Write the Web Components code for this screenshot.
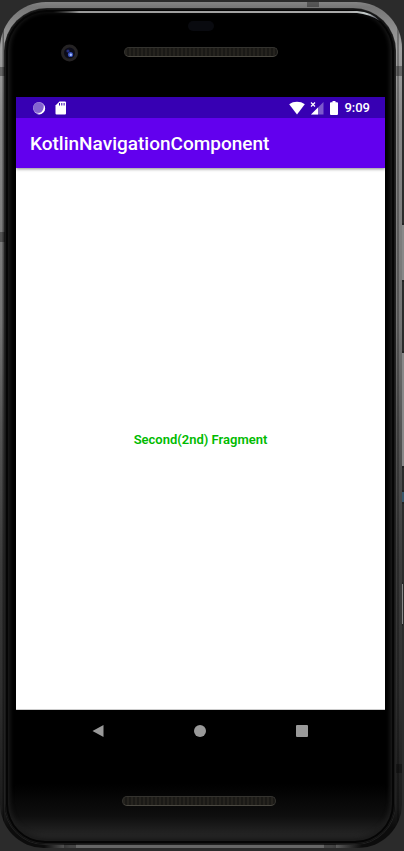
<!DOCTYPE html>
<html lang="en">
<head>
<meta charset="utf-8">
<meta name="viewport" content="width=device-width, initial-scale=1">
<title>KotlinNavigationComponent</title>
<style>
  body { margin: 0; background: #2b2b2b; font-family: Roboto, "Liberation Sans", sans-serif; }
</style>
</head>
<body>
<phone-frame>
  <phone-header slot="top"></phone-header>
  <status-bar time="9:09"></status-bar>
  <app-bar>KotlinNavigationComponent</app-bar>
  <fragment-view>Second(2nd) Fragment</fragment-view>
  <nav-bar></nav-bar>
  <speaker-grille slot="bottom"></speaker-grille>
</phone-frame>

<script>
function define(name, html) {
  const template = document.createElement('template');
  template.innerHTML = html;
  customElements.define(name, class extends HTMLElement {
    constructor() {
      super();
      this.attachShadow({ mode: 'open' }).append(template.content.cloneNode(true));
    }
    connectedCallback() {
      const time = this.shadowRoot.querySelector('time');
      if (time) time.textContent = this.getAttribute('time');
    }
  });
}

define('speaker-grille', `
<style>
  :host { display: block; box-sizing: border-box; width: 154px; height: 10px; border-radius: 5px;
    border: 1px solid #34332f; border-bottom-color: #4a4841;
    background: repeating-linear-gradient(90deg, #25231e 0 2px, #1a1916 2px 4px); }
</style>`);

define('phone-header', `
<style>
  :host { display: grid; grid-template-columns: 1fr auto 1fr; height: 88px; position: relative; }
  .camera { margin: 35px 0 0 56px; width: 17px; height: 18px; }
  .middle { display: flex; flex-direction: column; align-items: center; gap: 16px; padding: 12px 0 0 2px; }
  .sensor { width: 26px; height: 10px; border-radius: 5px; background: #090a0f; }
  .shine { position: absolute; top: 0; right: 0; width: 100%; height: 16px; }
</style>
<svg class="shine" viewBox="0 0 390 16" preserveAspectRatio="xMaxYMin slice" aria-hidden="true">
  <defs><linearGradient id="g"><stop offset="0" stop-color="#555" stop-opacity="0"/><stop offset=".08" stop-color="#999"/><stop offset=".9" stop-color="#aaa"/><stop offset=".96" stop-color="#c4cccc"/><stop offset="1" stop-color="#889" stop-opacity=".5"/></linearGradient></defs>
  <path d="M48 2H352Q367 3 375 12Q364 5 352 4H48Z" fill="url(#g)"/>
</svg>
<svg class="camera" viewBox="0 0 17 18" aria-hidden="true">
  <circle cx="8.500" cy="9" r="8.500" fill="#252324"/><circle cx="8.500" cy="9" r="5.500" fill="#0b0b18"/>
  <circle cx="7" cy="7" r="1.600" fill="#242e80"/><circle cx="9.500" cy="10.500" r="2.600" fill="#354eb5"/><circle cx="9.800" cy="10.800" r="1.200" fill="#a9c0ff"/>
</svg>
<div class="middle"><div class="sensor"></div><speaker-grille></speaker-grille></div>`);

define('phone-frame', `
<style>
  :host { display: block; position: relative; box-sizing: border-box; height: 100vh; min-height: 480px; padding: 2px 2px 3px 0; overflow: hidden; }
  .metal { position: relative; box-sizing: border-box; height: 100%; border-radius: 46px 46px 44px 44px; padding: 7px 7px 4px 5px;
    background:
      linear-gradient(90deg, #0000 44px, #666 70px calc(100% - 70px), #0000 calc(100% - 40px)) 0 100% / 100% 3px no-repeat,
      linear-gradient(90deg, #0000 2px, #0006 3px 4px, #0000 4px calc(100% - 5px), #0004 calc(100% - 5px) calc(100% - 3px), #0000 calc(100% - 3px)),
      linear-gradient(#858585, #777 5px, #a0a0a0 45px, #888 120px, #747474 38%, #555 50%, #3c3c3c 66%, #2e2e2e 82%, #1c1c1c calc(100% - 40px), #0c0c0c calc(100% - 20px)); }
  .glass { display: flex; flex-direction: column; box-sizing: border-box; height: 100%; overflow: hidden;
    border-radius: 42px 42px 40px 40px;
    box-shadow: 0 0 0 1px #222, inset 0 0 0 1px #181818, inset 0 0 0 3px #050505, inset 0 -2px 4px 5px #1c1c1c;
    background: linear-gradient(#000 calc(100% - 60px), #0e0e0e calc(100% - 28px), #282828 calc(100% - 6px), #080808 calc(100% - 2px)); }
  .screen { flex: 1; min-height: 0; display: flex; flex-direction: column; margin: 0 10px 0 11px; background: #000; }
  .foot { height: 92px; box-sizing: border-box; padding: 44px 0 0 0; display: flex; justify-content: center; }
  .foot slot { display: block; padding-right: 3px; }
  .seam { position: absolute; background: #0005; }
  .button { position: absolute; right: 0; width: 2px; background: #888; border: solid #222; border-width: 2px 0; box-sizing: border-box; }
</style>
<div class="button" style="top: 26.200%; height: 6.900%"></div>
<div class="button" style="top: 41.300%; height: 13.700%"></div>
<div class="button" style="top: 57.600%; height: 1.600%; background: #36566b"></div>
<div class="button" style="top: 68.400%; height: 5.200%; width: 1px; right: 1px"></div>
<div class="metal">
  <div class="glass">
    <slot name="top"></slot>
    <main class="screen"><slot></slot></main>
    <div class="foot"><slot name="bottom"></slot></div>
  </div>
  <i class="seam" style="left: 0; top: 65px; width: 5px; height: 9px"></i>
  <i class="seam" style="left: 0; top: 230px; width: 5px; height: 10px"></i>
  <i class="seam" style="right: 0; top: 64px; width: 6px; height: 10px"></i>
  <i class="seam" style="right: 0; bottom: 75px; width: 6px; height: 9px"></i>
  <i class="seam" style="right: 83px; top: 0; width: 12px; height: 5px"></i>
  <i class="seam" style="left: 64px; bottom: 0; width: 12px; height: 4px"></i>
  <i class="seam" style="right: 66px; bottom: 0; width: 12px; height: 4px"></i>
</div>`);

define('status-bar', `
<style>
  :host { display: flex; align-items: center; height: 21px; padding: 0 15px 0 16px; background: #3700b3; color: #fff; }
  svg { display: block; fill: currentColor; }
  .sd { margin-left: 9px; }
  .wifi { margin-left: auto; }
  .signal { margin-left: 5px; }
  .battery { margin: 0 6px; }
  time { font-size: 13px; line-height: 20px; font-weight: 500; }
</style>
<svg width="14" height="14" viewBox="0 0 14 14" aria-label="Sync"><circle cx="7" cy="7" r="6" fill="#b9a3e6"/><circle cx="6.500" cy="6.500" r="5.200" fill="#8463d0"/><path d="M12 4a6 6 0 0 1-8 8.500c4 .8 8-2 8-8.500z" fill="#fff"/></svg>
<svg class="sd" width="12" height="14" viewBox="0 0 12 14" aria-label="SD card"><path d="M4.500.5H10A1 1 0 0 1 11 1.500V12.500A1 1 0 0 1 10 13.500H1.500A1 1 0 0 1 .5 12.500V4.500Z"/><path d="M4 2h1v2.500H4zM6.300 2h1v2.500h-1zM8.600 2h1v2.500h-1z" fill="#3700b3"/></svg>
<svg class="wifi" width="16" height="14" viewBox="0 0 16 14" aria-label="Wi-Fi"><path d="M.2 3.200C4.500-.1 11.500-.1 15.800 3.200L8 13.500Z"/></svg>
<svg class="signal" width="14" height="14" viewBox="0 0 14 14" aria-label="No signal"><path d="M13.500 1V13.500H1Z" opacity=".35"/><path d="M8 6.500V13.500H1Z"/><path d="M1 1.500l4 4M5 1.500l-4 4" stroke="#fff" stroke-width="1.200"/></svg>
<svg class="battery" width="8" height="14" viewBox="0 0 8 14" aria-label="Battery full"><path d="M2.500 0h3v1.300H7a1 1 0 0 1 1 1V13a1 1 0 0 1-1 1H1a1 1 0 0 1-1-1V2.300a1 1 0 0 1 1-1h1.500z"/></svg>
<time></time>`);

define('app-bar', `
<style>
  :host { display: block; position: relative; z-index: 1; background: #6200ee; color: #fff; box-shadow: 0 1px 3px #0007; clip-path: inset(0 0 -6px 0); }
  h1 { margin: 0; padding: 15px 14px 13px; font-size: 19px; line-height: 22px; font-weight: 500; }
</style>
<h1><slot></slot></h1>`);

define('fragment-view', `
<style>
  :host { flex: 1; display: flex; align-items: center; justify-content: center; background: #fff; color: #0b0; padding-top: 2px;
    font-size: 13px; line-height: 16px; font-weight: 600; border-bottom: 1px solid #ccc; box-sizing: border-box; }
</style>
<slot></slot>`);

define('nav-bar', `
<style>
  :host { display: block; background: #000; }
  nav { display: grid; grid-template-columns: repeat(3, 1fr); padding: 0 32px 0 31px; }
  button { display: grid; place-items: center; height: 42px; padding: 0; border: 0; background: none; color: #999; cursor: pointer; }
  svg { display: block; fill: currentColor; }
</style>
<nav aria-label="System">
  <button aria-label="Back"><svg width="14" height="14" viewBox="0 0 14 14"><path d="M12.500 1V13L1.500 7Z"/></svg></button>
  <button aria-label="Home"><svg width="14" height="14" viewBox="0 0 14 14"><circle cx="7" cy="7" r="6"/></svg></button>
  <button aria-label="Recents"><svg width="14" height="14" viewBox="0 0 14 14"><rect x="1" y="1" width="12" height="12" rx="1"/></svg></button>
</nav>`);
</script>
</body>
</html>
